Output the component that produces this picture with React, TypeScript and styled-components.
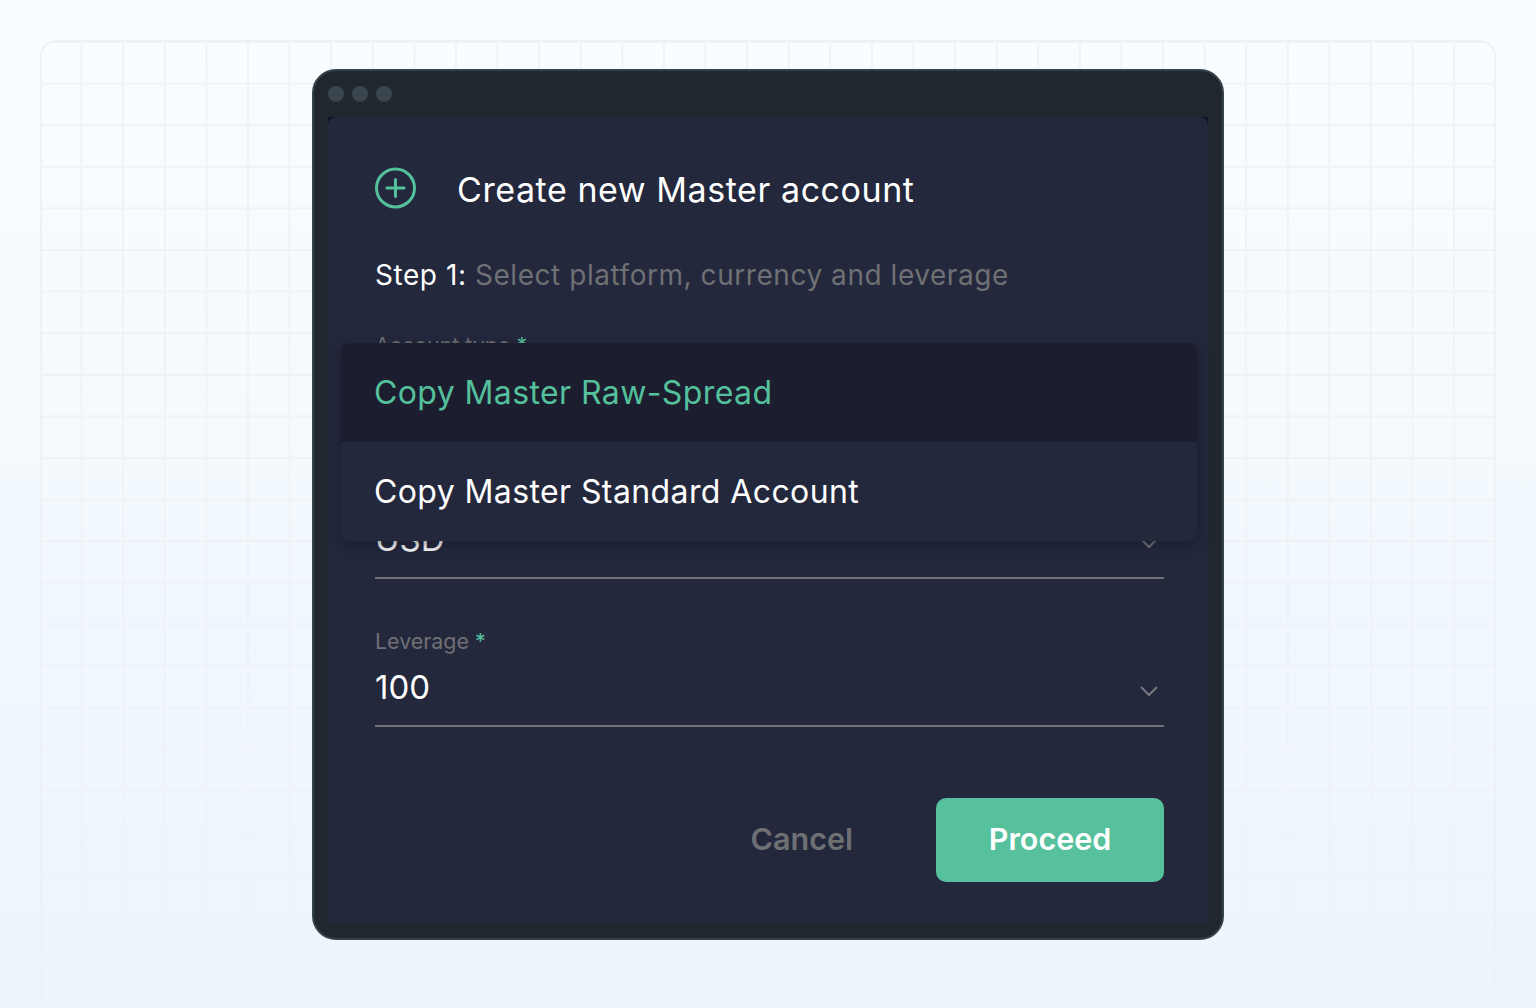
import React from "react";
import styled, { createGlobalStyle } from "styled-components";

const Global = createGlobalStyle`
  html, body { margin: 0; padding: 0; }
  body {
    height: 1008px;
    overflow: hidden;
    font-family: Inter, "Liberation Sans", sans-serif;
    background: linear-gradient(180deg, #f9fdff 0%, #ecf5fc 100%);
  }
`;

const Page = styled.div`
  box-sizing: border-box;
  width: 1536px;
  height: 1008px;
  padding: 40px 40px 0;
  display: flex;
  flex-direction: column;
`;

const Frame = styled.div`
  box-sizing: border-box;
  height: 926px;
  flex: none;
  border: 2px solid #eef1f5;
  border-radius: 16px;
  display: flex;
  justify-content: center;
  padding-top: 27px;
  background-image:
    linear-gradient(to right, #eff2f6 2px, transparent 2px),
    linear-gradient(to bottom, #eff2f6 2px, transparent 2px);
  background-size: 41.6px 41.6px;
  background-position: -3px -1px;
`;

const Below = styled.div`
  box-sizing: border-box;
  height: 40px;
  flex: none;
  border-right: 2px solid #eef2f7;
  border-left: 2px solid #eef2f7;
  border-bottom: 2px solid #eef2f7;
`;

const Window = styled.div`
  box-sizing: border-box;
  width: 912px;
  height: 871px;
  flex: none;
  background: #20282e;
  border: 2px solid #34424c;
  border-radius: 24px;
  padding: 0 14px 14px;
  display: flex;
  flex-direction: column;
`;

const TitleBar = styled.div`
  height: 46px;
  flex: none;
  display: flex;
  align-items: center;
  gap: 8px;
`;

const Dot = styled.span`
  width: 16px;
  height: 16px;
  border-radius: 50%;
  background: #3a464e;
`;

const PanelBack = styled.div`
  flex: 1;
  display: flex;
  background: #11111c;
`;

const Panel = styled.div`
  flex: 1;
  position: relative;
  box-sizing: border-box;
  background: #24283d;
  border-radius: 8px 8px 0 0;
  padding: 50px 44px 0 47px;
  display: flex;
  flex-direction: column;
`;

const Header = styled.div`
  display: flex;
  align-items: center;
  gap: 41px;
  height: 42px;
`;

const PlusIcon = styled.svg`
  width: 41px;
  height: 42px;
  flex: none;
`;

const Title = styled.h1`
  margin: 4px 0 0;
  font-size: 34px;
  line-height: 42px;
  font-weight: 400;
  color: #ffffff;
  letter-spacing: 0.56px;
  white-space: nowrap;
`;

const Step = styled.p`
  margin: 46px 0 0;
  font-size: 28px;
  line-height: 40px;
  color: #6f7074;
  letter-spacing: 0.55px;
  white-space: nowrap;
`;

const StepLead = styled.span`
  color: #ffffff;
`;

const Fields = styled.div`
  margin-top: 36px;
  display: flex;
  flex-direction: column;
`;

const Field = styled.div`
  box-sizing: border-box;
  height: 148px;
  display: flex;
  flex-direction: column;
`;

const Label = styled.label`
  font-size: 21.4px;
  line-height: 28px;
  height: 30px;
  color: #6f7074;
`;

const Star = styled.span`
  color: #55c09c;
`;

const ValueRow = styled.div`
  display: flex;
  justify-content: space-between;
  align-items: center;
  height: 68px;
  border-bottom: 2px solid #737377;
`;

const Value = styled.span`
  font-size: 33px;
  line-height: 40px;
  color: #ffffff;
  margin-top: -8px;
`;

const Chevron = styled.svg`
  width: 20px;
  height: 12px;
  margin-right: 5px;
`;

const Dropdown = styled.div`
  position: absolute;
  left: 13px;
  top: 226px;
  width: 856px;
  border-radius: 8px;
  overflow: hidden;
  background: #24283d;
  box-shadow: 0 4px 14px rgba(15, 17, 30, 0.45);
`;

const Option = styled.div<{ $active?: boolean }>`
  height: 99px;
  padding: 0 0 0 33px;
  box-sizing: border-box;
  display: flex;
  align-items: center;
  font-size: 32px;
  letter-spacing: 0.4px;
  white-space: nowrap;
  color: ${(p) => (p.$active ? "#55c09c" : "#ffffff")};
  background: ${(p) => (p.$active ? "#1c1e30" : "#24283d")};
`;

const Actions = styled.div`
  margin-top: 23px;
  display: flex;
  justify-content: flex-end;
  align-items: center;
  gap: 83px;
`;

const CancelButton = styled.button`
  border: 0;
  padding: 0 0 4px;
  background: none;
  font: 600 30.5px Inter, "Liberation Sans", sans-serif;
  color: #6f7074;
`;

const ProceedButton = styled.button`
  width: 228px;
  height: 84px;
  border: 0;
  padding: 0 0 4px;
  border-radius: 10px;
  background: #57c09d;
  color: #ffffff;
  font: 600 30.5px Inter, "Liberation Sans", sans-serif;
`;

const ChevronDown = () => (
  <Chevron viewBox="0 0 20 12" fill="none">
    <path d="M2 2l8 8 8-8" stroke="#77787c" strokeWidth="2" />
  </Chevron>
);

const fields = [
  { label: "Account type", value: "Copy Master Raw-Spread" },
  { label: "Currency", value: "USD" },
  { label: "Leverage", value: "100" },
];

export default function App() {
  return (
    <>
      <Global />
      <Page>
        <Frame>
          <Window>
            <TitleBar>
              <Dot />
              <Dot />
              <Dot />
            </TitleBar>
            <PanelBack>
              <Panel>
                <Header>
                  <PlusIcon viewBox="0 0 41 42" fill="none">
                    <circle cx="20.5" cy="21" r="19" stroke="#55c09c" strokeWidth="3" />
                    <path d="M20.5 12.5v17M12 21h17" stroke="#55c09c" strokeWidth="3" strokeLinecap="round" />
                  </PlusIcon>
                  <Title>Create new Master account</Title>
                </Header>
                <Step>
                  <StepLead>Step 1: </StepLead>Select platform, currency and leverage
                </Step>
                <Fields>
                  {fields.map((f) => (
                    <Field key={f.label}>
                      <Label>
                        {f.label} <Star>*</Star>
                      </Label>
                      <ValueRow>
                        <Value>{f.value}</Value>
                        <ChevronDown />
                      </ValueRow>
                    </Field>
                  ))}
                </Fields>
                <Actions>
                  <CancelButton>Cancel</CancelButton>
                  <ProceedButton>Proceed</ProceedButton>
                </Actions>
                <Dropdown>
                  <Option $active>Copy Master Raw-Spread</Option>
                  <Option>Copy Master Standard Account</Option>
                </Dropdown>
              </Panel>
            </PanelBack>
          </Window>
        </Frame>
        <Below />
      </Page>
    </>
  );
}
